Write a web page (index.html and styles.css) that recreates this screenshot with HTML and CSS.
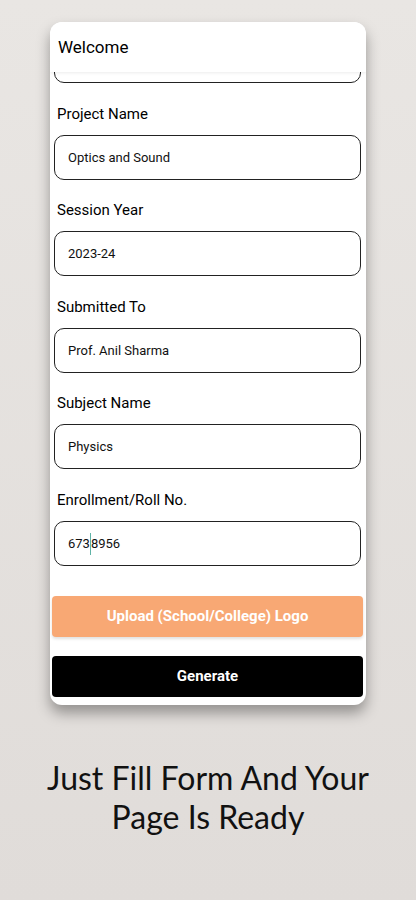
FILE: index.html
```html
<!DOCTYPE html>
<html lang="en">
<head>
    <meta charset="UTF-8">
    <meta name="viewport" content="width=device-width, initial-scale=1.0">
    <title>Project Page Maker</title>
    <link rel="stylesheet" href="styles.css">
</head>
<body>
    <div class="phone">
        <header class="app-bar">Welcome</header>

        <div class="form-area">
            <!-- field scrolled out of view -->
            <div class="field-box field-cut"></div>

            <div class="field">
                <label>Project Name</label>
                <div class="field-box">Optics and Sound</div>
            </div>
            <div class="field">
                <label>Session Year</label>
                <div class="field-box">2023-24</div>
            </div>
            <div class="field">
                <label>Submitted To</label>
                <div class="field-box">Prof. Anil Sharma</div>
            </div>
            <div class="field">
                <label>Subject Name</label>
                <div class="field-box">Physics</div>
            </div>
            <div class="field">
                <label>Enrollment/Roll No.</label>
                <div class="field-box">673<span class="caret"></span>8956</div>
            </div>

            <button class="btn btn-upload">Upload (School/College) Logo</button>
            <button class="btn btn-generate">Generate</button>
        </div>
    </div>

    <p class="tagline">Just Fill Form And Your<br>Page Is Ready</p>
</body>
</html>
```

FILE: styles.css
```css
body {
    margin: 0;
    padding: 0;
    min-height: 900px;
    font-family: Roboto, sans-serif;
    background: linear-gradient(#e9e6e3, #e0dcd9);
    color: #000;
}

/* Phone frame */
.phone {
    width: 316px;
    margin: 22px auto 0;
    background-color: #fff;
    border-radius: 12px;
    overflow: hidden;
    box-shadow: 0 8px 14px rgba(0, 0, 0, 0.35);
}

.app-bar {
    position: relative;
    z-index: 1;
    height: 50px;
    line-height: 50px;
    padding-left: 8px;
    font-size: 17px;
    background-color: #fff;
    box-shadow: 0 1px 3px rgba(0, 0, 0, 0.08);
}

/* Form */
.form-area {
    padding: 0 5px 8px 4px;
}

.field {
    padding-top: 20.5px;
}

.field label {
    display: block;
    height: 20px;
    line-height: 20px;
    margin-bottom: 11px;
    padding-left: 3px;
    font-size: 15px;
}

.field-box {
    box-sizing: border-box;
    height: 45px;
    line-height: 43px;
    padding-left: 13px;
    border: 1px solid #222;
    border-radius: 10px;
    font-size: 13px;
    color: #111;
}

.field-cut {
    margin-top: -34px;
}

.caret {
    display: inline-block;
    width: 1px;
    height: 22px;
    vertical-align: middle;
    background-color: #5fb3a6;
}

/* Buttons */
.btn {
    display: block;
    box-sizing: border-box;
    width: 311px;
    height: 41px;
    margin-left: -2px;
    border: none;
    border-radius: 4px;
    font-family: Roboto, sans-serif;
    font-weight: bold;
    font-size: 15px;
    color: #fff;
}

.btn-upload {
    margin-top: 30px;
    background-color: #f8a874;
    box-shadow: 0 2px 3px rgba(0, 0, 0, 0.12);
}

.btn-generate {
    margin-top: 19px;
    background-color: #000;
}

/* Caption */
.tagline {
    margin: 53px 0 0;
    text-align: center;
    font-family: Lato, sans-serif;
    font-size: 32px;
    line-height: 39px;
    color: #111;
}
```
